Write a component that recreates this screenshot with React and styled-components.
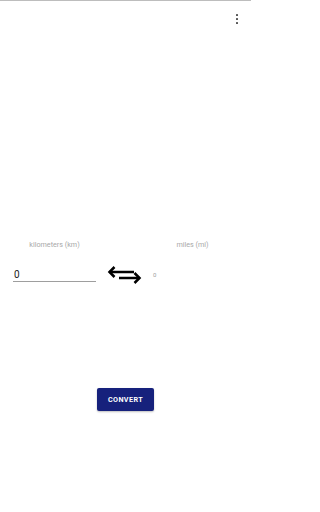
import { useState } from 'react';
import styled, { createGlobalStyle } from 'styled-components';

const GlobalStyle = createGlobalStyle`
  html, body {
    margin: 0;
    padding: 0;
    background: #ffffff;
  }
  body {
    font-family: Roboto, 'Liberation Sans', sans-serif;
  }
`;

const StyledPage = styled('div')({
  display: 'flex',
  flexDirection: 'column',
  width: '100%',
  maxWidth: '251px',
  height: '512px',
  overflow: 'hidden',
  background: '#ffffff',
});

const StyledHeader = styled('header')({
  display: 'flex',
  justifyContent: 'flex-end',
  alignItems: 'flex-start',
  height: '29px',
  borderTop: '1px solid #bdbdbd',
  padding: '12px 12px 0 0',
  boxSizing: 'border-box',
});

const StyledMenuButton = styled('button')({
  display: 'flex',
  border: 'none',
  background: 'transparent',
  padding: 0,
  cursor: 'pointer',
});

const StyledConverter = styled('section')({
  display: 'grid',
  gridTemplateColumns: '83px 57px 79px',
  gridTemplateRows: '10px 15px',
  rowGap: '17px',
  padding: '0 0 0 13px',
  marginTop: '211px',
});

const StyledLabel = styled('span')({
  fontSize: '7.2px',
  lineHeight: '10px',
  color: '#a8a8a8',
  textAlign: 'center',
  whiteSpace: 'nowrap',
});

const StyledInput = styled('input')({
  width: '100%',
  height: '15px',
  boxSizing: 'border-box',
  border: 'none',
  borderBottom: '1px solid #9e9e9e',
  padding: '0 1px',
  margin: 0,
  fontFamily: 'Roboto, "Liberation Sans", sans-serif',
  fontSize: '10px',
  lineHeight: '14px',
  color: '#212121',
  background: 'transparent',
  outline: 'none',
});

const StyledSwap = styled('button')({
  display: 'flex',
  justifyContent: 'center',
  alignItems: 'center',
  alignSelf: 'center',
  height: '20px',
  border: 'none',
  background: 'transparent',
  padding: 0,
  cursor: 'pointer',
});

const StyledResult = styled('span')({
  fontSize: '6px',
  lineHeight: '15px',
  color: '#9e9e9e',
});

const StyledActions = styled('div')({
  display: 'flex',
  justifyContent: 'center',
  marginTop: '106px',
});

const StyledConvertButton = styled('button')({
  width: '57px',
  height: '23px',
  border: 'none',
  borderRadius: '2px',
  background: '#16217c',
  color: '#ffffff',
  fontFamily: 'Roboto, "Liberation Sans", sans-serif',
  fontWeight: 700,
  fontSize: '7.2px',
  letterSpacing: '0.4px',
  padding: 0,
  cursor: 'pointer',
  boxShadow: '0 1px 2px rgba(0,0,0,0.25)',
});

const MenuDots = () => (
  <svg width="4" height="11" viewBox="0 0 4 11">
    <rect x="1" y="1" width="2" height="2" rx="0.5" fill="#555" />
    <rect x="1" y="5" width="2" height="2" rx="0.5" fill="#555" />
    <rect x="1" y="9" width="2" height="2" rx="0.5" fill="#555" />
  </svg>
);

const SwapArrows = () => (
  <svg width="35" height="20" viewBox="0 0 35 20" fill="none" stroke="#000" strokeWidth="2.5">
    <line x1="2.5" y1="7" x2="27" y2="7" />
    <polyline points="7.5,2 2.5,7 7.5,12" />
    <line x1="12" y1="13" x2="32.5" y2="13" />
    <polyline points="27.5,8 32.5,13 27.5,18" />
  </svg>
);

export default function App() {
  const [km, setKm] = useState('0');

  return (
    <>
      <GlobalStyle />
      <StyledPage>
        <StyledHeader>
          <StyledMenuButton type="button" aria-label="menu">
            <MenuDots />
          </StyledMenuButton>
        </StyledHeader>

        <StyledConverter>
          <StyledLabel>kilometers (km)</StyledLabel>
          <span />
          <StyledLabel>miles (mi)</StyledLabel>

          <StyledInput value={km} onChange={(e) => setKm(e.target.value)} />
          <StyledSwap type="button" aria-label="swap">
            <SwapArrows />
          </StyledSwap>
          <StyledResult>0</StyledResult>
        </StyledConverter>

        <StyledActions>
          <StyledConvertButton type="button">CONVERT</StyledConvertButton>
        </StyledActions>
      </StyledPage>
    </>
  );
}
